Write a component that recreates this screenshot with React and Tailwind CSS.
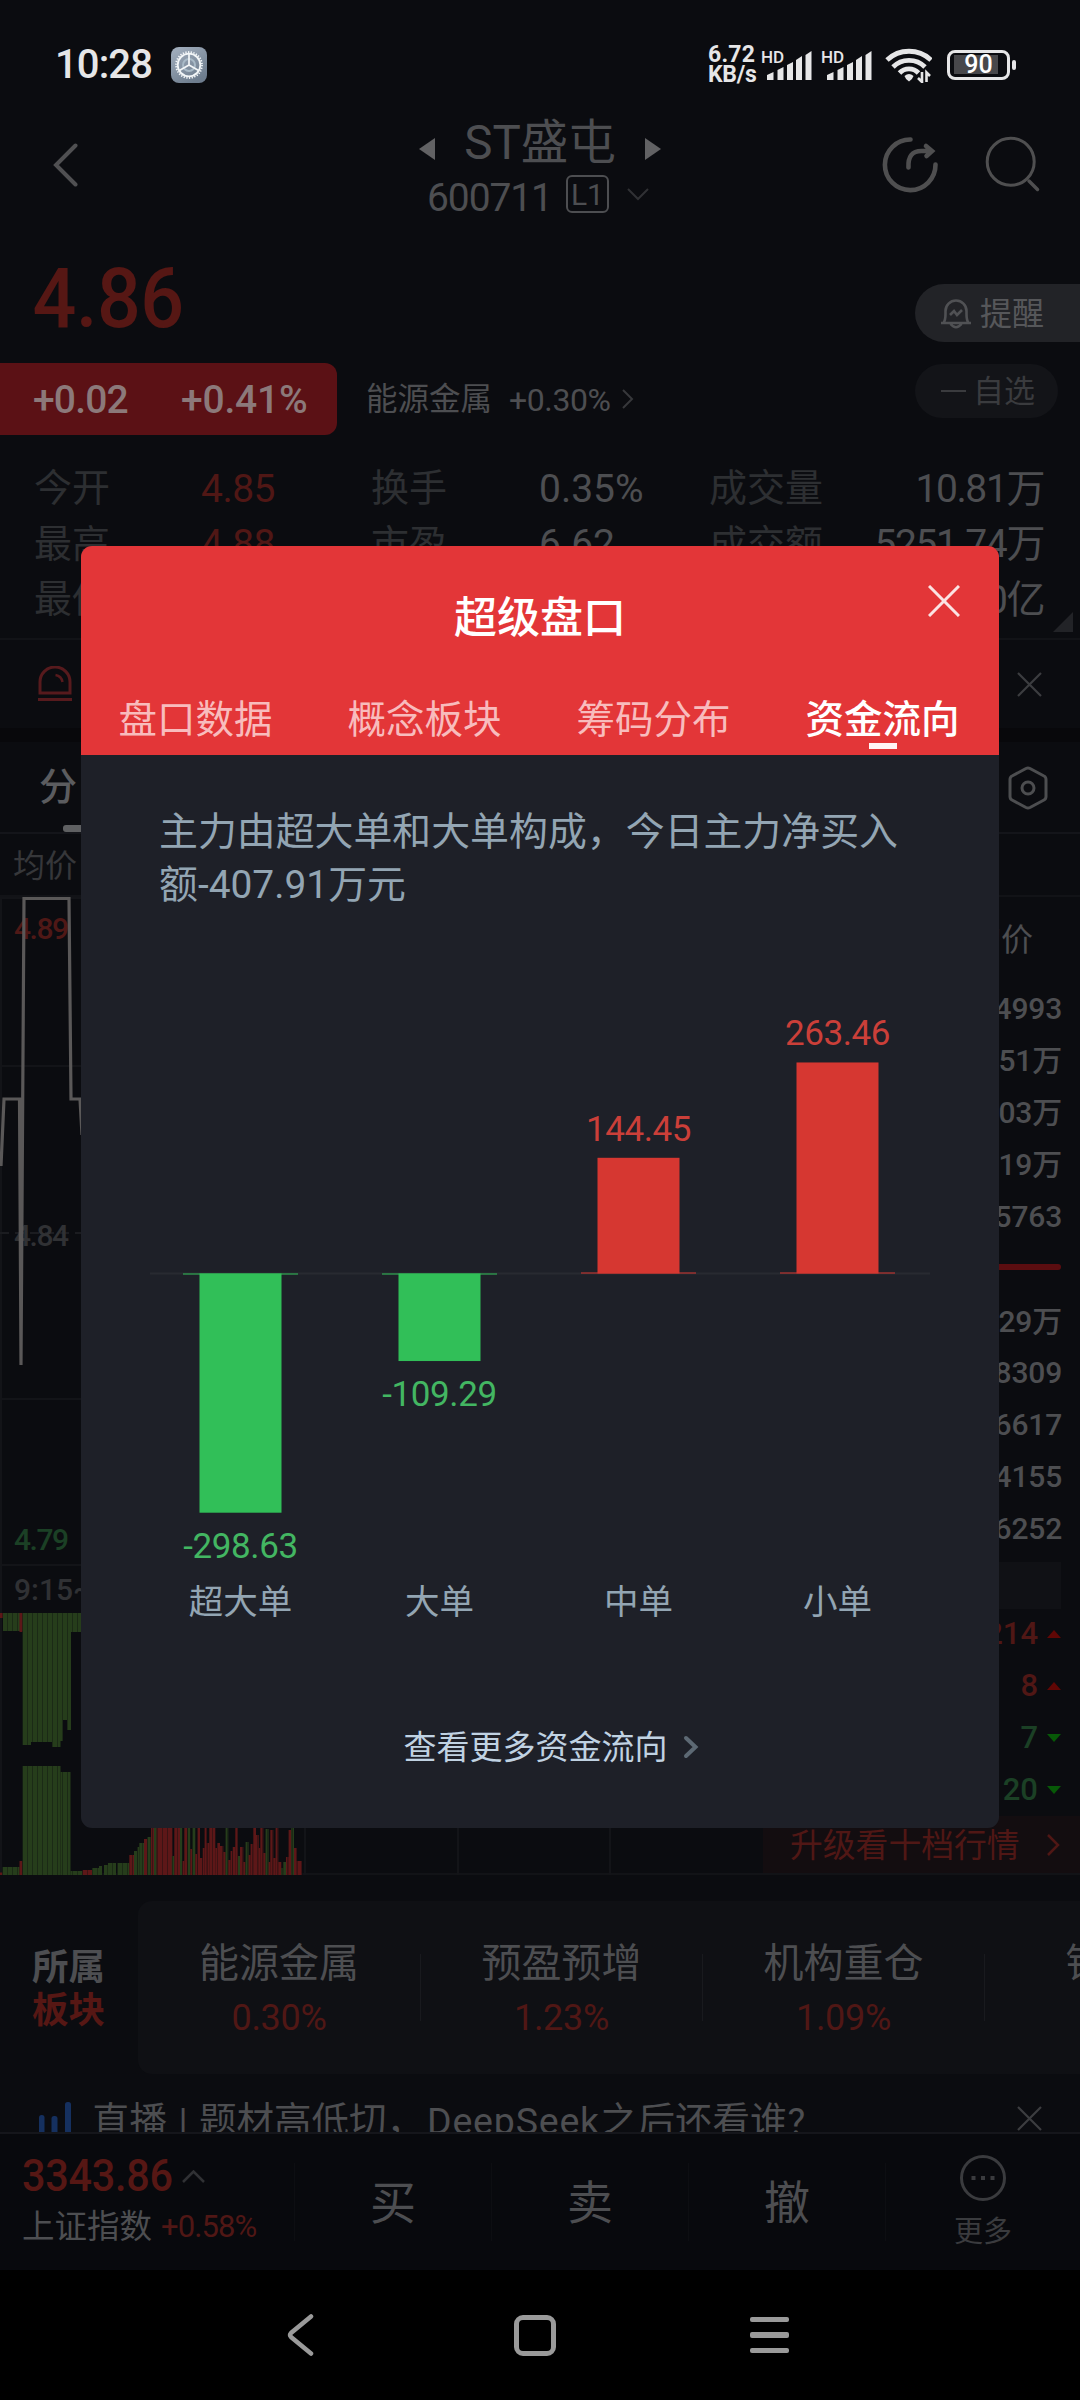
import React from "react";

const FONT = "font-[Roboto,'Noto_Sans_CJK_SC',sans-serif]";

const STATS = [
  ["今开", "4.85", "换手", "0.35%", "成交量", "10.81万"],
  ["最高", "4.88", "市盈", "6.62", "成交额", "5251.74万"],
  ["最低", "4.81", "市值", "1.56", "总市值", "153.00亿"],
];

const BOOK = ["4993", "1.51万", "1.03万", "1.19万", "5763"];
const BOOK_BUY = ["1.29万", "8309", "6617", "4155", "6252"];

const TICKS = [
  { value: "214", up: true },
  { value: "8", up: true },
  { value: "7", up: false },
  { value: "20", up: false },
];

const SECTORS = [
  { name: "能源金属", pct: "0.30%" },
  { name: "预盈预增", pct: "1.23%" },
  { name: "机构重仓", pct: "1.09%" },
  { name: "锂电池", pct: "" },
];

const TABS = ["盘口数据", "概念板块", "筹码分布", "资金流向"];

const FLOWS = [
  { label: "超大单", value: -298.63 },
  { label: "大单", value: -109.29 },
  { label: "中单", value: 144.45 },
  { label: "小单", value: 263.46 },
];

// [x, width, height, color], all standing on the volume baseline
const R = "#5d1718";
const G = "#263d1b";
const VOLUME = [
  [0, 2.5, 2.5, R], [2.5, 17, 8, G], [19.5, 3, 14, R], [22.5, 38, 109, G], [60.5, 10, 103, G], [70.5, 12, 4, G],
  [82.6, 9.4, 5, R], [92, 7, 7, G], [99, 3, 9, G], [104, 4, 10, G], [108, 8, 12, G], [117.3, 12, 12, G], [129.3, 4.7, 20, R],
  [134, 3.3, 24, G], [137.3, 2, 28, G], [139.3, 4.7, 32, G], [144, 3.3, 36, R], [147.3, 3.3, 38, G],
  [151, 3, 48, R], [154, 2.6, 48, G], [156.6, 16, 48, R], [171.8, 2.5, 19, G], [174.3, 5.7, 48, R],
  [180, 2.3, 48, G], [182.3, 2, 14, R], [184.3, 3, 48, R], [187.6, 2.6, 48, G], [190.3, 2, 26, R],
  [192.3, 3, 48, G], [195.3, 2, 21, R], [197.3, 2.7, 48, R], [200, 2.6, 17, R], [202.6, 2, 27, R],
  [204.6, 2, 48, R], [206.6, 2.7, 32, R], [209.3, 6, 48, R], [215.3, 1.7, 27, R], [217, 3, 32, R],
  [220, 3.3, 29, R], [223.3, 2.3, 23, R], [225.6, 2.7, 48, G], [228.3, 2.3, 15, R], [230.6, 2, 24, R],
  [232.6, 2.7, 28, R], [235.3, 2.7, 48, R], [238, 2, 19, G], [240, 3.3, 28, R], [243.3, 2, 13, R],
  [245.6, 3, 33, G], [248.6, 2, 20, R], [250.6, 2.7, 31, R], [253.3, 2.7, 48, R], [256, 2.7, 40, R],
  [258.7, 1.6, 27, R], [260.3, 3, 48, R], [263.3, 2.3, 22, R], [265.6, 3, 46, G], [268.6, 1.7, 13, R],
  [270.3, 3, 45, R], [273.3, 2.3, 17, R], [275.6, 2.7, 48, R], [278.3, 3, 13, R], [281.3, 2, 7, G],
  [283.3, 2.7, 13, G], [286, 2.6, 18, R], [288.6, 2.7, 45, R], [291.3, 2.7, 48, G], [294, 2.6, 27, R], [296.6, 5, 14, R],
];

export default function App() {
  return (
    <div className={`relative flex h-[2400px] w-[1080px] flex-col overflow-hidden bg-[#0b0c10] text-[#4d4e51] ${FONT}`}>
      <StatusBar />
      <Header />
      <PriceBlock />
      <Stats />
      <AlertRow />
      <ChartTabs />
      <ChartSection />
      <Sectors />
      <LiveRow />
      <TradeBar />
      <SystemNav />
      <FlowModal />
    </div>
  );
}

function StatusBar() {
  return (
    <div className="flex h-[100px] shrink-0 items-center pt-[29px] pl-[55px] text-[#e6e6e7]">
      <span className="w-[116px] text-[40px] font-medium tracking-[-0.9px]">10:28</span>
      <svg width="36" height="36" viewBox="0 0 36 36">
        <defs>
          <linearGradient id="gear" x1="0" y1="0" x2="0.6" y2="1">
            <stop offset="0" stopColor="#a5b1c0" />
            <stop offset="1" stopColor="#6e7d8e" />
          </linearGradient>
        </defs>
        <rect width="36" height="36" rx="8" fill="url(#gear)" />
        <circle cx="18" cy="18" r="6" fill="none" stroke="#a9bac7" strokeWidth="2" />
        <circle cx="18" cy="18" r="11.3" fill="none" stroke="#f3f6f8" strokeWidth="1.8" />
        <circle cx="18" cy="18" r="13" fill="none" stroke="#f3f6f8" strokeWidth="1.8" strokeDasharray="1.3 1.42" />
        <path d="M18 18V7M18 18l-9.6 5.6M18 18l9.6 5.6" stroke="#f3f6f8" strokeWidth="1.7" />
      </svg>
      <div className="ml-[501px] flex w-[55px] flex-col text-[23px] leading-[19.5px] font-bold">
        <span className="tracking-[0.2px]">6.72</span>
        <span className="tracking-[-0.3px]">KB/s</span>
      </div>
      <Signal />
      <Signal />
      <svg width="47" height="36" viewBox="885 47 47 36" className="ml-[2px]">
        <g fill="none" stroke="#e6e6e7" strokeWidth="4.8">
          <path d="M887 60a32 32 0 0 1 44 0" />
          <path d="M893 67a22.5 22.5 0 0 1 32 0" />
          <path d="M899.5 73a13 13 0 0 1 19 0" />
        </g>
        <path d="M904.5 76q4.500-4 9 0q-1 3.500-4.500 5.500q-3.500-2-4.500-5.500z" fill="#e6e6e7" />
        <path d="M922 72v10l-4-4M926.500 82v-9.500l3.500 3.500" fill="none" stroke="#e6e6e7" strokeWidth="2.600" />
      </svg>
      <div className="ml-[15px] flex h-[30px] w-[63px] items-center rounded-[8px] border-[3px] border-[#e6e6e7] px-[4px]">
        <div className="flex h-[19px] w-[44px] items-center justify-center bg-[#48484b] pl-[5px] text-[25px] font-medium text-white">90</div>
      </div>
      <div className="ml-[2px] h-[10px] w-[4px] rounded-[2px] bg-[#e6e6e7]" />
    </div>
  );
}

function Signal() {
  return (
    <svg width="60" height="33" viewBox="0 0 60 33" className="overflow-visible">
      <text x="-2" y="15" fontSize="17" fontWeight="500" fill="#e6e6e7">HD</text>
      <g fill="#e6e6e7">
        <path d="M4 27l6.500-3v8H4zM14.500 22l6-3v13h-6zM24 17l6-3v18h-6zM33 12l6-4v24h-6zM42.500 7l6-4v29h-6z" />
      </g>
    </svg>
  );
}

function Header() {
  return (
    <div className="flex h-[130px] shrink-0 items-center pl-[53px]">
      <svg width="26" height="44" viewBox="0 0 26 44" fill="none" stroke="#505052" strokeWidth="4" strokeLinecap="round">
        <path d="M22.500 2.500L3 22l19.500 19.500" />
      </svg>
      <div className="ml-[340px] flex w-[242px] flex-col items-center">
        <div className="flex h-[58px] w-[242px] items-center justify-between pt-[4px]">
          <svg width="16" height="22" viewBox="0 0 16 22" className="mt-[12px]"><path d="M16 0v22L0 11z" fill="#626264" /></svg>
          <span className="text-[47.500px] leading-[58px]">ST盛屯</span>
          <svg width="16" height="22" viewBox="0 0 16 22" className="mt-[12px]"><path d="M0 0v22l16-11z" fill="#626264" /></svg>
        </div>
        <div className="flex h-[48px] items-center pr-[4px]">
          <span className="pt-[9px] text-[39px] leading-[39px] tracking-[-1.100px]">600711</span>
          <span className="ml-[14px] flex h-[38px] w-[43px] items-center justify-center rounded-[6px] border-2 text-[30px]">L1</span>
          <svg width="22" height="13" viewBox="0 0 22 13" className="ml-[18px]" fill="none" stroke="#303134" strokeWidth="2"><path d="M1 1l10 10L21 1" /></svg>
        </div>
      </div>
      <svg width="160" height="60" viewBox="880 135 160 60" className="ml-[219px]" fill="none" stroke="#4f4f50" strokeLinecap="round">
        <path d="M910.500 139.500a25.300 25.300 0 1 0 25 25" strokeWidth="4.600" />
        <path d="M908.500 167.500q-1-16.500 13-16.500h10M926 146l6 5-5.500 5" strokeWidth="4.600" />
        <circle cx="1010.700" cy="161.700" r="23.500" strokeWidth="3" />
        <path d="M1029 181l8.500 8.500" strokeWidth="3.500" />
      </svg>
    </div>
  );
}

function PriceBlock() {
  return (
    <div className="flex h-[215px] shrink-0 justify-between">
      <div className="flex flex-col">
        <div className="mt-[24px] h-[90px] w-[200px] origin-left scale-x-[0.93] pl-[35px] text-[83px] leading-[90px] font-medium tracking-[-0.500px] text-[#561714]">4.86</div>
        <div className="mt-[19px] flex h-[72px] items-center">
          <div className="flex h-[72px] w-[337px] items-center rounded-r-[12px] bg-[#5b1115] pt-[2px] pl-[33px] text-[39px] font-medium tracking-[-0.800px] text-[#8c797a]">
            <span className="w-[148px]">+0.02</span>
            <span className="tracking-[-0.200px]">+0.41%</span>
          </div>
          <span className="ml-[29px] pt-[2px] text-[31.500px]">能源金属</span>
          <span className="ml-[17px] pt-[2px] text-[32px] tracking-[-0.400px]">+0.30%</span>
          <svg width="12" height="20" viewBox="0 0 12 20" className="ml-[11px]" fill="none" stroke="#37383b" strokeWidth="2"><path d="M1 1l9 9-9 9" /></svg>
        </div>
      </div>
      <div className="flex w-[165px] flex-col pt-[54px]">
        <div className="flex h-[58px] items-center rounded-l-full bg-[#222327] pl-[25px] text-[32px] text-[#56575a]">
          <svg width="32" height="32" viewBox="0 0 32 32" fill="none" stroke="#505154" strokeWidth="2.600">
            <path d="M1 26h30M3.500 26q2-3 2-9v-3a10.500 10.500 0 0 1 21 0v3q0 6 2 9M10.500 27q5.500 6.500 11 0M10 18l4-4 3 4 5-5" />
          </svg>
          <span className="ml-[8px] pt-[1px]">提醒</span>
        </div>
        <div className="mt-[22px] flex h-[54px] w-[143px] items-center rounded-full bg-[#131418] pl-[26px] text-[31px] text-[#3a3b3e]">
          <span className="mr-[7px] h-[2.500px] w-[25px] bg-[#3a3b3e]" />
          <span className="pt-[2px]">自选</span>
        </div>
      </div>
    </div>
  );
}

function Stats() {
  return (
    <div className="relative flex h-[195px] shrink-0 flex-col border-b-2 border-[#121317] pt-[16px]">
      {STATS.map((row) => (
        <div key={row[0]} className="flex h-[55.500px] items-center pr-[36px] pl-[34px] text-[39px]">
          <span className="w-[167px] text-[38px] text-[#2d2f32]">{row[0]}</span>
          <span className="w-[170px] tracking-[-0.500px] text-[#501715]">{row[1]}</span>
          <span className="w-[168px] text-[38px] text-[#2d2f32]">{row[2]}</span>
          <span className="w-[170px]">{row[3]}</span>
          <span className="text-[38px] text-[#2d2f32]">{row[4]}</span>
          <span className="ml-auto tracking-[-1.400px]">{row[5]}</span>
        </div>
      ))}
      <svg width="20" height="20" viewBox="0 0 20 20" className="absolute right-[7px] bottom-[6px]"><path d="M20 0v20H0z" fill="#222327" /></svg>
    </div>
  );
}

function CloseIcon() {
  return (
    <svg width="25" height="25" viewBox="0 0 25 25" fill="none" stroke="#3c3d40" strokeWidth="2.200"><path d="M1 1l23 23M24 1L1 24" /></svg>
  );
}

function AlertRow() {
  return (
    <div className="flex h-[102px] shrink-0 flex-col">
      <div className="flex h-[88px] items-center justify-between pr-[38px] pl-[37px]">
        <svg width="36" height="36" viewBox="0 0 36 36" fill="none" stroke="#571a1d" strokeWidth="3">
          <path d="M3 27V16a15 15 0 0 1 30 0v11zM1 33.500h34" />
          <path d="M18.500 9q6 1 7 7" strokeWidth="2.500" />
        </svg>
        <CloseIcon />
      </div>
      <div className="h-[14px] bg-[#08080b]" />
    </div>
  );
}

function ChartTabs() {
  return (
    <div className="flex h-[155px] shrink-0 flex-col">
      <div className="flex h-[92px] items-end justify-between border-b-2 border-[#14151a] pr-[31px] pl-[39px]">
        <div className="flex flex-col items-center">
          <span className="text-[38px] leading-[60px] font-medium tracking-[3px] text-[#5b5c5f]">分时</span>
          <span className="mt-[8px] h-[7px] w-[34px] shrink-0 rounded-[3px] bg-[#5f6062]" />
        </div>
        <svg width="42" height="46" viewBox="0 0 42 46" className="mb-[21px]" fill="none" stroke="#4d4e50" strokeWidth="3" strokeLinejoin="round">
          <path d="M19 3.500q2-1 4 0l14 7.500q2 1 2 3.500v17q0 2.500-2 3.500l-14 7.500q-2 1-4 0L5 35q-2-1-2-3.500v-17Q3 12 5 11z" />
          <circle cx="21" cy="23" r="6" />
        </svg>
      </div>
      <div className="flex h-[63px] items-center border-b-2 border-[#121317] pt-[2px] pl-[13px] text-[32px] text-[#36373a]">均价</div>
    </div>
  );
}

function ChartSection() {
  return (
    <div className="flex h-[978px] shrink-0 border-b-2 border-[#121317]">
      <IntradayChart />
      <OrderBook />
    </div>
  );
}

function IntradayChart() {
  return (
    <svg width="763" height="978" viewBox="0 897 763 978" className="shrink-0">
      <defs>
        <pattern id="stripes" width="5" height="10" patternUnits="userSpaceOnUse">
          <rect x="2" width="1" height="10" fill="#0b0c10" fillOpacity="0.400" />
        </pattern>
      </defs>
      <g stroke="#131418" strokeWidth="2" fill="none">
        <path d="M1 897V1875M0 898H763M0 1066H763M0 1399H763M0 1565H763M305 897V1875M458 897V1875M610 897V1875" />
        <path d="M0 1233H763" strokeDasharray="9 6" stroke="#1b1c20" />
      </g>
      <g fontSize="30" fontWeight="500">
        <text x="14" y="939" fill="#4f1816" textLength="55">4.89</text>
        <text x="14" y="1246" fill="#303134" textLength="55">4.84</text>
        <text x="14" y="1550" fill="#1b4025" textLength="55">4.79</text>
        <text x="14" y="1600" fill="#303134">9:15~9:25</text>
      </g>
      <path d="M1 1166L4 1099H19.500L21 1365L24 898.500H69L71 1099H80L82 1135" fill="none" stroke="#5a5858" strokeWidth="3.200" />
      <g fill={G}>
        <path d="M3 1613H82V1632H71V1730H67V1720H63V1741H60.500V1747H52V1742H31V1745H22.500V1631H3z" />
        {VOLUME.map(([x, w, h, fill], i) => (
          <rect key={i} x={x} y={1875 - h} width={w} height={h} fill={fill} />
        ))}
      </g>
      <rect x="0" y="1613" width="3" height="5" fill={R} />
      <rect x="19.500" y="1613" width="3" height="19" fill={R} />
      <rect x="0" y="1613" width="304" height="262" fill="url(#stripes)" />
    </svg>
  );
}

function BookRow({ children }) {
  return <div className="flex h-[52px] items-center justify-end pr-[18px] tracking-[-0.200px]">{children}</div>;
}

function OrderBook() {
  return (
    <div className="flex w-[317px] flex-col text-[30px] font-medium">
      <div className="flex h-[86px] items-center justify-end pr-[47px] text-[32px] font-normal">均价</div>
      {BOOK.map((v) => <BookRow key={v}>{v}</BookRow>)}
      <div className="mt-[22px] mr-[19px] mb-[25px] ml-[20px] h-[6px] shrink-0 rounded-full bg-[#5b0d10]" />
      {BOOK_BUY.map((v) => <BookRow key={v}>{v}</BookRow>)}
      <div className="mt-[7px] mr-[19px] ml-[20px] h-[47px] shrink-0 bg-[#101115]" />
      {TICKS.map((t) => (
        <div key={t.value} className={`flex h-[52px] items-center justify-end gap-[9px] pr-[19px] text-[31px] ${t.up ? "text-[#501715]" : "text-[#1b4025]"}`}>
          {t.value}
          {t.up ? (
            <svg width="14" height="8" viewBox="0 0 14 8"><path d="M7 0l7 8H0z" fill="#600705" /></svg>
          ) : (
            <svg width="14" height="8" viewBox="0 0 14 8"><path d="M0 0h14L7 8z" fill="#075907" /></svg>
          )}
        </div>
      ))}
      <div className="mt-auto flex h-[57px] items-center bg-[#130d10] pr-[20px] pl-[27px] text-[32.800px] font-normal text-[#501715]">
        <span className="pt-[4px]">升级看十档行情</span>
        <svg width="13" height="22" viewBox="0 0 13 22" className="ml-auto" fill="none" stroke="#501715" strokeWidth="2.500"><path d="M1 1l10 10L1 21" /></svg>
      </div>
    </div>
  );
}

function Sectors() {
  return (
    <div className="flex h-[199px] shrink-0 pt-[26px]">
      <div className="flex w-[138px] shrink-0 flex-col justify-center pt-[3px] pl-[32px] text-[36.500px] leading-[43px] font-bold">
        <span>所属</span>
        <span className="text-[#561714]">板块</span>
      </div>
      <div className="flex h-[173px] w-[1128px] shrink-0 rounded-[14px] bg-[#0f1014] pt-[36px]">
        {SECTORS.map((s, i) => (
          <div key={s.name} className="flex w-[282px] shrink-0">
            {i > 0 && <div className="mt-[17px] h-[67px] w-px bg-[#191a1e]" />}
            <div className="flex flex-1 flex-col items-center">
              <span className="text-[40px] leading-[54px]">{s.name}</span>
              <span className="text-[36px] leading-[54px] tracking-[-0.300px] text-[#501715]">{s.pct}</span>
            </div>
          </div>
        ))}
      </div>
    </div>
  );
}

function LiveRow() {
  return (
    <div className="flex h-[58px] shrink-0 items-start overflow-hidden pr-[38px] pl-[39px]">
      <svg width="32" height="36" viewBox="0 0 32 36" className="mt-[28px]" fill="#15305f">
        <rect x="0" y="13" width="5.500" height="30" rx="2.500" />
        <rect x="12.500" y="14" width="6" height="30" rx="2.500" />
        <rect x="26" y="0" width="6" height="40" rx="2.500" />
      </svg>
      <div className="mt-[20px] ml-[21px] flex shrink-0 text-[37.500px] leading-[54px] whitespace-nowrap">
        <span>直播</span>
        <span className="w-[32px] text-center">|</span>
        <span>题材高低切，</span>
        <span className="ml-[3px] tracking-[0.800px]">DeepSeek</span>
        <span>之后还看谁?</span>
      </div>
      <span className="mt-[32px] ml-auto"><CloseIcon /></span>
    </div>
  );
}

function TradeBar() {
  return (
    <div className="flex h-[138px] shrink-0 items-center border-t-2 border-[#15161b] bg-[#08090d]">
      <div className="-mt-[6px] flex w-[294px] flex-col pl-[22px]">
        <div className="flex items-center leading-[56px]">
          <span className="w-[160px] origin-left scale-x-[0.92] text-[45px] font-medium tracking-[-0.300px] text-[#561714]">3343.86</span>
          <svg width="23" height="13" viewBox="0 0 23 13" fill="none" stroke="#303134" strokeWidth="2.500"><path d="M1 12L11.500 1.500 22 12" /></svg>
        </div>
        <div className="flex items-center text-[32.500px] leading-[46px]">
          上证指数
          <span className="ml-[9px] text-[31px] tracking-[-0.900px] text-[#501715]">+0.58%</span>
        </div>
      </div>
      {["买", "卖", "撤"].map((t) => (
        <div key={t} className="flex h-[78px] w-[197px] items-center justify-center border-l border-[#0d0e12] pt-[2px] text-[46px]">{t}</div>
      ))}
      <div className="flex h-[78px] flex-1 flex-col items-center justify-center border-l border-[#0d0e12] pt-[2px] text-[29px] leading-[40px] text-[#3a3b3e]">
        <svg width="48" height="48" viewBox="0 0 48 48" className="mb-[10px] shrink-0" fill="none" stroke="#3a3b3e" strokeWidth="3">
          <circle cx="24" cy="24" r="21.500" />
          <path d="M12.500 24h4M22 24h4M31.500 24h4" strokeWidth="4" />
        </svg>
        更多
      </div>
    </div>
  );
}

function SystemNav() {
  return (
    <div className="flex h-[130px] shrink-0 items-center bg-black pl-[287px]">
      <svg width="28" height="42" viewBox="0 0 28 42" fill="none" stroke="#9a9a9a" strokeWidth="4.500" strokeLinecap="round">
        <path d="M24 2.500L4 19q-2 2 0 4L24 39.500" />
      </svg>
      <div className="ml-[199px] h-[41px] w-[42px] rounded-[9px] border-[5px] border-[#9a9a9a]" />
      <div className="ml-[194px] flex flex-col gap-[10px]">
        <span className="h-[5.500px] w-[39px] rounded-[2px] bg-[#9a9a9a]" />
        <span className="h-[5.500px] w-[39px] rounded-[2px] bg-[#9a9a9a]" />
        <span className="h-[5.500px] w-[39px] rounded-[2px] bg-[#9a9a9a]" />
      </div>
    </div>
  );
}

function FlowModal() {
  return (
    <div className="absolute top-[546px] left-[81px] flex h-[1282px] w-[918px] flex-col overflow-hidden rounded-[11px] bg-[#1e2028]">
      <div className="h-[209px] bg-[#e33638] text-white">
        <div className="relative flex h-[142px] items-center justify-center pt-[2px] text-[43px] font-medium">
          超级盘口
          <svg width="32" height="32" viewBox="0 0 32 32" className="absolute top-[39px] right-[39px]" fill="none" stroke="#fbe3e3" strokeWidth="3"><path d="M1 1l30 30M31 1L1 31" /></svg>
        </div>
        <div className="flex h-[67px] pr-[2px]">
          {TABS.map((tab, i) => (
            <div key={tab} className={`flex flex-1 flex-col items-center text-[38.500px] leading-[64px] ${i === 3 ? "font-medium text-white" : "text-[#f8bcbd]"}`}>
              {tab}
              {i === 3 && <span className="-mt-[9px] h-[6px] w-[28px] shrink-0 bg-[#fff5f5]" />}
            </div>
          ))}
        </div>
      </div>
      <p className="mt-[51px] h-[103px] pr-[80px] pl-[78px] text-[38.900px] leading-[52.500px] text-[#93a5b3]">
        主力由超大单和大单构成，今日主力净买入额-407.91万元
      </p>
      <FlowChart />
      <div className="mt-[68px] flex h-[80px] items-center justify-center gap-[15px] pl-[22px] text-[33px] text-[#c0d2e2]">
        查看更多资金流向
        <svg width="16" height="24" viewBox="0 0 16 24" className="-mt-[2px]" fill="none" stroke="#5d6974" strokeWidth="4" strokeLinecap="round"><path d="M3 3l9.500 9L3 21" /></svg>
      </div>
    </div>
  );
}

function FlowChart() {
  const axis = 364.5;
  return (
    <svg width="918" height="731" viewBox="0 0 918 731" className="shrink-0">
      <path d={`M69 ${axis}H849`} stroke="#282a31" strokeWidth="2" />
      {FLOWS.map((f, i) => {
        const cx = 159.5 + i * 199;
        const up = f.value > 0;
        const h = Math.abs(f.value) * 0.801;
        const color = up ? "#d63731" : "#31bf58";
        return (
          <g key={f.label} textAnchor="middle">
            <rect x={cx - 57.5} y={up ? axis - 1 : axis} width="115" height="1" fill={color} />
            <rect x={cx - 41} y={up ? axis - h : axis} width="82" height={h} fill={color} />
            <text x={cx} y={up ? axis - h - 17 : axis + h + 45} fontSize="35" fill={up ? "#cb3f39" : "#43b662"} letterSpacing="-0.4">
              {f.value}
            </text>
            <text x={cx} y="705" fontSize="34.5" fill="#93a5b3">{f.label}</text>
          </g>
        );
      })}
    </svg>
  );
}
